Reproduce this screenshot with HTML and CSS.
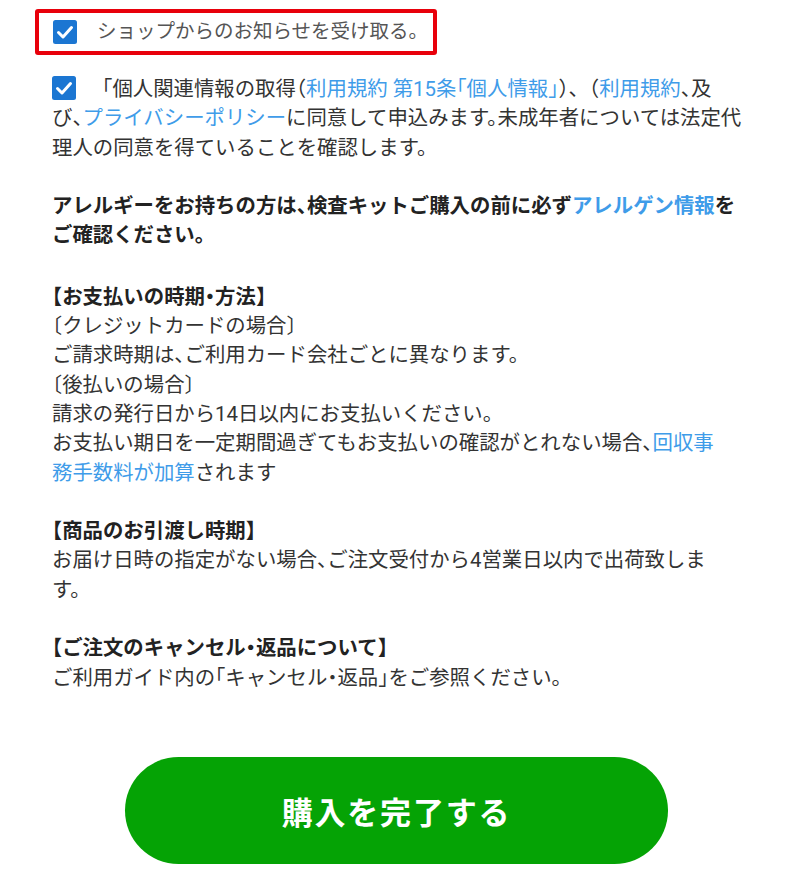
FILE: index.html
```html
<!DOCTYPE html>
<html lang="ja">
<head>
<meta charset="utf-8">
<title>購入確認</title>
<link rel="stylesheet" href="styles.css">
</head>
<body>
<div class="page">
  <label class="notice">
    <svg class="check" width="24" height="24" viewBox="0 0 24 24"><rect x="0" y="0" width="24" height="24" rx="2.5" fill="#1b76d2"/><path d="M5.5 12.5 L10 17 L18.5 7.5" fill="none" stroke="#fff" stroke-width="3" stroke-linecap="round" stroke-linejoin="round"/></svg>
    <span class="notice-text">ショップからのお知らせを受け取る。</span>
  </label>

  <p class="para agree"><svg class="check inline" width="24" height="24" viewBox="0 0 24 24"><rect x="0" y="0" width="24" height="24" rx="2.5" fill="#1b76d2"/><path d="M5.5 12.5 L10 17 L18.5 7.5" fill="none" stroke="#fff" stroke-width="3" stroke-linecap="round" stroke-linejoin="round"/></svg><span class="full">「</span>個人関連情報の取得（<a class="link">利用規約 第15条「個人情報」</a>）<span class="full">、</span>（<a class="link">利用規約</a>、及<br>び、<a class="link">プライバシーポリシー</a>に同意して申込みます。未成年者については法定代<br>理人の同意を得ていることを確認します。</p>

  <p class="para bold">アレルギーをお持ちの方は、検査キットご購入の前に必ず<a class="link">アレルゲン情報</a>を<br>ご確認ください。</p>

  <div class="para">
    <div class="bold">【お支払いの時期・方法】</div>
    <div>〔クレジットカードの場合〕</div>
    <div>ご請求時期は、ご利用カード会社ごとに異なります。</div>
    <div>〔後払いの場合〕</div>
    <div>請求の発行日から14日以内にお支払いください。</div>
    <div>お支払い期日を一定期間過ぎてもお支払いの確認がとれない場合、<a class="link">回収事<br>務手数料が加算</a>されます</div>
  </div>

  <div class="para">
    <div class="bold">【商品のお引渡し時期】</div>
    <div>お届け日時の指定がない場合、ご注文受付から4営業日以内で出荷致しま<br>す。</div>
  </div>

  <div class="para">
    <div class="bold">【ご注文のキャンセル・返品について】</div>
    <div>ご利用ガイド内の「キャンセル・返品」をご参照ください。</div>
  </div>

  <button class="submit" type="button">購入を完了する</button>
</div>
</body>
</html>
```

FILE: styles.css
```css
html, body {
  margin: 0;
  padding: 0;
  background: #ffffff;
}
body {
  font-family: Roboto, "Noto Sans CJK JP", sans-serif;
  color: #333333;
}
.page {
  width: 720px;
  padding: 9px 0 40px 52px;
  font-size: 20.4px;
  line-height: 29.3px;
  font-feature-settings: "halt";
}
.full {
  font-feature-settings: normal;
}
.notice {
  display: inline-flex;
  align-items: center;
  box-sizing: border-box;
  height: 46px;
  margin-left: -17px;
  padding: 0 15px 0 14px;
  border: 4px solid #e8000b;
  border-radius: 3px;
}
.check {
  display: block;
  flex: none;
}
.notice-text {
  margin-left: 20px;
  font-size: 19.5px;
  color: #555555;
}
.para {
  margin: 0 0 29.3px 0;
}
.agree {
  margin-top: 20px;
}
.check.inline {
  display: inline-block;
  vertical-align: -4px;
  margin-right: 16px;
}
.bold {
  font-weight: bold;
  color: #222222;
}
p.bold {
  margin-bottom: 32px;
}
.link {
  color: #3f9ce9;
  text-decoration: none;
}
.submit {
  display: block;
  width: 543px;
  height: 107px;
  margin: 64px 0 0 73px;
  border: none;
  border-radius: 54px;
  background: #05a305;
  color: #ffffff;
  font-family: Roboto, "Noto Sans CJK JP", sans-serif;
  font-size: 31px;
  font-weight: bold;
  letter-spacing: 1.8px;
}
```
